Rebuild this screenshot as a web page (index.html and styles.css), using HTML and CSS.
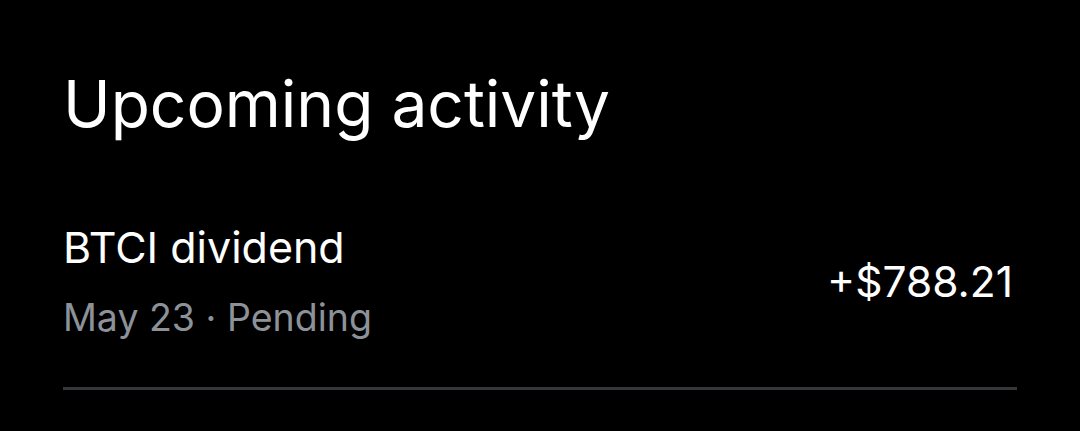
FILE: index.html
```html
<!DOCTYPE html>
<html lang="en">
<head>
  <meta charset="UTF-8" />
  <title>Upcoming activity</title>
  <link rel="stylesheet" href="styles.css">
</head>
<body>

<section class="activity">
  <h1 class="activity-title">Upcoming activity</h1>

  <div class="activity-row">
    <div class="activity-info">
      <div class="activity-name">BTCI dividend</div>
      <div class="activity-meta">May 23 · Pending</div>
    </div>
    <div class="activity-amount">+$788.21</div>
  </div>
</section>

</body>
</html>
```

FILE: styles.css
```css
* {
  box-sizing: border-box;
  font-family: 'Inter', 'Roboto', sans-serif;
}

body {
  margin: 0;
  background: #000;
  color: #fff;
}

.activity {
  padding: 62px 63px 0 63px;
}

.activity-title {
  margin: 0;
  font-size: 64px;
  font-weight: 400;
  line-height: 84px;
}

.activity-row {
  display: flex;
  justify-content: space-between;
  align-items: center;
  margin-top: 76px;
  padding-bottom: 46px;
  border-bottom: 3px solid #35383b;
}

.activity-name {
  font-size: 43px;
  line-height: 50px;
}

.activity-meta {
  margin-top: 23px;
  font-size: 37.5px;
  line-height: 46px;
  color: #8c9298;
}

.activity-amount {
  font-size: 42.5px;
  padding-right: 4px;
}
```
